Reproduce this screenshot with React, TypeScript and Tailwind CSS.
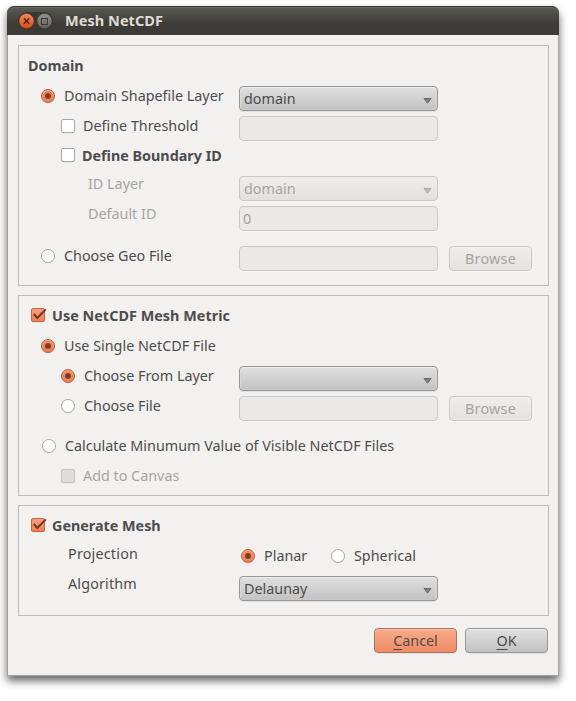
import type { ReactNode } from "react";

function Radio({ on = false }: { on?: boolean }) {
  return (
    <svg className="block h-4 w-4 shrink-0" viewBox="0 0 16 16">
      <defs>
        <linearGradient id="radioFill" x1="0" y1="0" x2="0" y2="1">
          <stop offset="0" stopColor="#f9a07c" />
          <stop offset="1" stopColor="#ee7c50" />
        </linearGradient>
      </defs>
      <circle cx="8" cy="8.6" r="7" fill="#dedddb" />
      <circle cx="8" cy="8" r="6.5" fill={on ? "url(#radioFill)" : "#fff"} stroke={on ? "#c9603c" : "#aaa7a3"} />
      {on && <circle cx="8" cy="8" r="4.3" fill="#f79a75" stroke="#dc6b42" strokeWidth="0.6" />}
      {on && <circle cx="8" cy="8" r="3" fill="#783d2b" />}
    </svg>
  );
}

function Check({ on = false, disabled = false, className = "" }: { on?: boolean; disabled?: boolean; className?: string }) {
  return (
    <svg className={`block h-4 w-4 shrink-0 overflow-visible ${className}`} viewBox="0 0 16 16">
      <defs>
        <linearGradient id="checkFill" x1="0" y1="0" x2="0" y2="1">
          <stop offset="0" stopColor="#f9a27f" />
          <stop offset="1" stopColor="#f07d50" />
        </linearGradient>
      </defs>
      <rect x="1" y="2" width="14" height="13.6" rx="2" fill="#e2e1df" />
      <rect
        x="1.5" y="1.5" width="13" height="13" rx="1.5"
        fill={on ? "url(#checkFill)" : disabled ? "#dddcda" : "#fff"}
        stroke={on ? "#c8623f" : disabled ? "#c3c2bf" : "#a9a7a3"}
      />
      {on && <path d="M3.8 6.8 L7.3 11 L15.8 2.4" fill="none" stroke="#6b3b2a" strokeWidth="2" />}
    </svg>
  );
}

function Row({ children, className = "" }: { children?: ReactNode; className?: string }) {
  return <div className={`flex h-[30px] items-start ${className}`}>{children}</div>;
}

function Option({ control, label, indent, text = "", gap = "gap-2" }: { control: ReactNode; label: string; indent: string; text?: string; gap?: string }) {
  return (
    <div className={`flex h-[30px] w-[220px] shrink-0 items-center whitespace-nowrap ${indent} ${gap}`}>
      {control}
      <span className={text}>{label}</span>
    </div>
  );
}

function Combo({ value = "", disabled = false }: { value?: string; disabled?: boolean }) {
  return (
    <div
      className={`mt-[5px] flex h-[25px] w-[199px] shrink-0 items-center justify-between rounded-[4px] border pr-[5px] pl-[4px] ${
        disabled
          ? "border-[#cac9c7] bg-linear-to-b from-[#eeedec] to-[#e2e1df] text-[#a6a4a1] shadow-[0_1px_0_#f8f7f6]"
          : "border-[#979797] bg-linear-to-b from-[#e0e0e0] to-[#c2c2c2] shadow-[inset_0_1px_0_#ececec,inset_1px_0_1px_#dcdcdc,inset_-1px_0_1px_#dcdcdc,0_1px_0_#e2e1df]"
      }`}
    >
      <span>{value}</span>
      <svg className="mt-[4px] h-[6px] w-[9px]" viewBox="0 0 9 6">
        <path d="M1 .5H8L4.5 5.2Z" fill={disabled ? "#bbbab7" : "#808080"} stroke={disabled ? "#aaa9a6" : "#6b6b6b"} />
      </svg>
    </div>
  );
}

function Field({ value = "" }: { value?: string }) {
  return (
    <div className="mt-[5px] flex h-[25px] w-[199px] shrink-0 items-center rounded-[4px] border border-[#cbcac8] bg-[#eae9e7] pl-[3px] text-[#a09e9b] shadow-[0_1px_0_#f8f7f6]">
      {value}
    </div>
  );
}

function Browse() {
  return (
    <button className="mt-[5px] ml-[11px] h-[25px] w-[83px] shrink-0 rounded-[4px] border border-[#cac9c7] bg-linear-to-b from-[#efeeed] to-[#e3e2e0] tracking-[0.25px] text-[#a6a4a1] shadow-[inset_0_0_2px_#f5f5f4,0_1px_0_#f8f7f6]">
      Browse
    </button>
  );
}

function Group({ children, className }: { children: ReactNode; className: string }) {
  return <section className={`w-[531px] border border-[#bcbbb9] pt-[5px] ${className}`}>{children}</section>;
}

export default function App() {
  return (
    <main className="h-[701px] w-[576px] overflow-hidden bg-white pt-[6px] pl-[7px] font-['Noto_Sans','Open_Sans',sans-serif] text-[14.35px] leading-5 text-[#4c4c4c]">
      <div className="h-[670px] w-[552px] rounded-t-[7px] border border-t-0 border-[#a3a39d] bg-[#f2f1f0] shadow-[0_5px_8px_0_rgba(0,0,0,0.6)]">
        <header className="-mx-px flex h-[29px] items-center rounded-t-[7px] border-t border-[#353530] bg-linear-to-b from-[#5b5b54] to-[#3c3b37] to-60% pl-[11px] shadow-[inset_0_1px_0_#6b6a62]">
          <svg className="h-[18px] w-[36px]" viewBox="0 0 36 18">
            <defs>
              <linearGradient id="closeFill" x1="0" y1="0" x2="0" y2="1">
                <stop offset="0" stopColor="#f58b60" />
                <stop offset="1" stopColor="#dc4b14" />
              </linearGradient>
              <linearGradient id="maxFill" x1="0" y1="0" x2="0" y2="1">
                <stop offset="0" stopColor="#93928b" />
                <stop offset="1" stopColor="#63625c" />
              </linearGradient>
            </defs>
            <rect width="35" height="18" rx="9" fill="#383732" />
            <circle cx="8.5" cy="9" r="7.5" fill="url(#closeFill)" stroke="#542b18" strokeWidth=".4" />
            <path d="M5.8 6.3l5.4 5.4M11.2 6.3l-5.4 5.4" stroke="#47271c" strokeWidth="1.4" />
            <circle cx="26.5" cy="9" r="7.5" fill="url(#maxFill)" stroke="#2d2c28" strokeWidth=".4" />
            <rect x="23.5" y="6.5" width="6" height="6" fill="none" stroke="#3c3b37" />
          </svg>
          <h1 className="ml-[11px] pb-[2px] text-[14.5px] font-bold tracking-[0.05px] text-[#dfdbd2]">Mesh NetCDF</h1>
        </header>

        <div className="pt-[10px] pl-[10px]">
          <Group className="h-[241px]">
            <Row className="pt-[5px] pl-[9px]">
              <h2 className="font-bold">Domain</h2>
            </Row>
            <Row>
              <Option indent="pl-[21px]" control={<Radio on />} label="Domain Shapefile Layer" />
              <Combo value="domain" />
            </Row>
            <Row>
              <Option indent="pl-[41px]" gap="gap-[7px]" control={<Check />} label="Define Threshold" />
              <Field />
            </Row>
            <Row>
              <Option indent="pl-[41px]" gap="gap-[6px]" control={<Check className="mb-[2px]" />} label="Define Boundary ID" text="font-bold" />
            </Row>
            <Row>
              <span className="w-[220px] pt-[3px] pl-[69px] text-[#a6a4a1]">ID Layer</span>
              <Combo value="domain" disabled />
            </Row>
            <Row>
              <span className="w-[220px] pt-[3px] pl-[69px] text-[#a6a4a1]">Default ID</span>
              <Field value="0" />
            </Row>
            <Row className="mt-[10px]">
              <Option indent="pl-[21px]" control={<Radio />} label="Choose Geo File" />
              <Field />
              <Browse />
            </Row>
          </Group>

          <Group className="mt-[9px] h-[201px]">
            <Row>
              <Option indent="pl-[11px]" gap="gap-[6px]" control={<Check on className="mb-[2px]" />} label="Use NetCDF Mesh Metric" text="font-bold tracking-[0.05px]" />
            </Row>
            <Row>
              <Option indent="pl-[21px]" control={<Radio on />} label="Use Single NetCDF File" />
            </Row>
            <Row>
              <Option indent="pl-[41px]" control={<Radio on />} label="Choose From Layer" />
              <Combo />
            </Row>
            <Row>
              <Option indent="pl-[41px]" control={<Radio />} label="Choose File" />
              <Field />
              <Browse />
            </Row>
            <Row className="mt-[10px]">
              <Option indent="pl-[22px]" control={<Radio />} label="Calculate Minumum Value of Visible NetCDF Files" />
            </Row>
            <Row>
              <Option indent="pl-[41px]" gap="gap-[7px]" control={<Check disabled />} label="Add to Canvas" text="text-[#a6a4a1]" />
            </Row>
          </Group>

          <Group className="mt-[9px] h-[111px]">
            <Row>
              <Option indent="pl-[11px]" gap="gap-[6px]" control={<Check on className="mb-[2px]" />} label="Generate Mesh" text="font-bold" />
            </Row>
            <Row>
              <span className="w-[220px] pt-[3px] pl-[49px] tracking-[0.2px]">Projection</span>
              <div className="flex h-[30px] items-center gap-2 pl-px">
                <Radio on />
                <span className="w-[58px]">Planar</span>
                <Radio />
                <span>Spherical</span>
              </div>
            </Row>
            <Row>
              <span className="w-[220px] pt-[3px] pl-[49px] tracking-[0.15px]">Algorithm</span>
              <Combo value="Delaunay" />
            </Row>
          </Group>

          <footer className="mt-[12px] flex w-[530px] justify-end gap-[8px]">
            <button className="h-[25px] w-[83px] rounded-[4px] border border-[#a87565] bg-linear-to-b from-[#f8ab8b] to-[#ef8c66] shadow-[inset_0_1px_0_#fbc1a9,0_1px_0_#e2e1df]">
              <span className="underline underline-offset-[3px]">C</span>ancel
            </button>
            <button className="h-[25px] w-[83px] rounded-[4px] border border-[#979797] bg-linear-to-b from-[#e0e0e0] to-[#c2c2c2] shadow-[inset_0_1px_0_#ececec,0_1px_0_#e2e1df]">
              <span className="underline underline-offset-[3px]">O</span>K
            </button>
          </footer>
        </div>
      </div>
    </main>
  );
}
